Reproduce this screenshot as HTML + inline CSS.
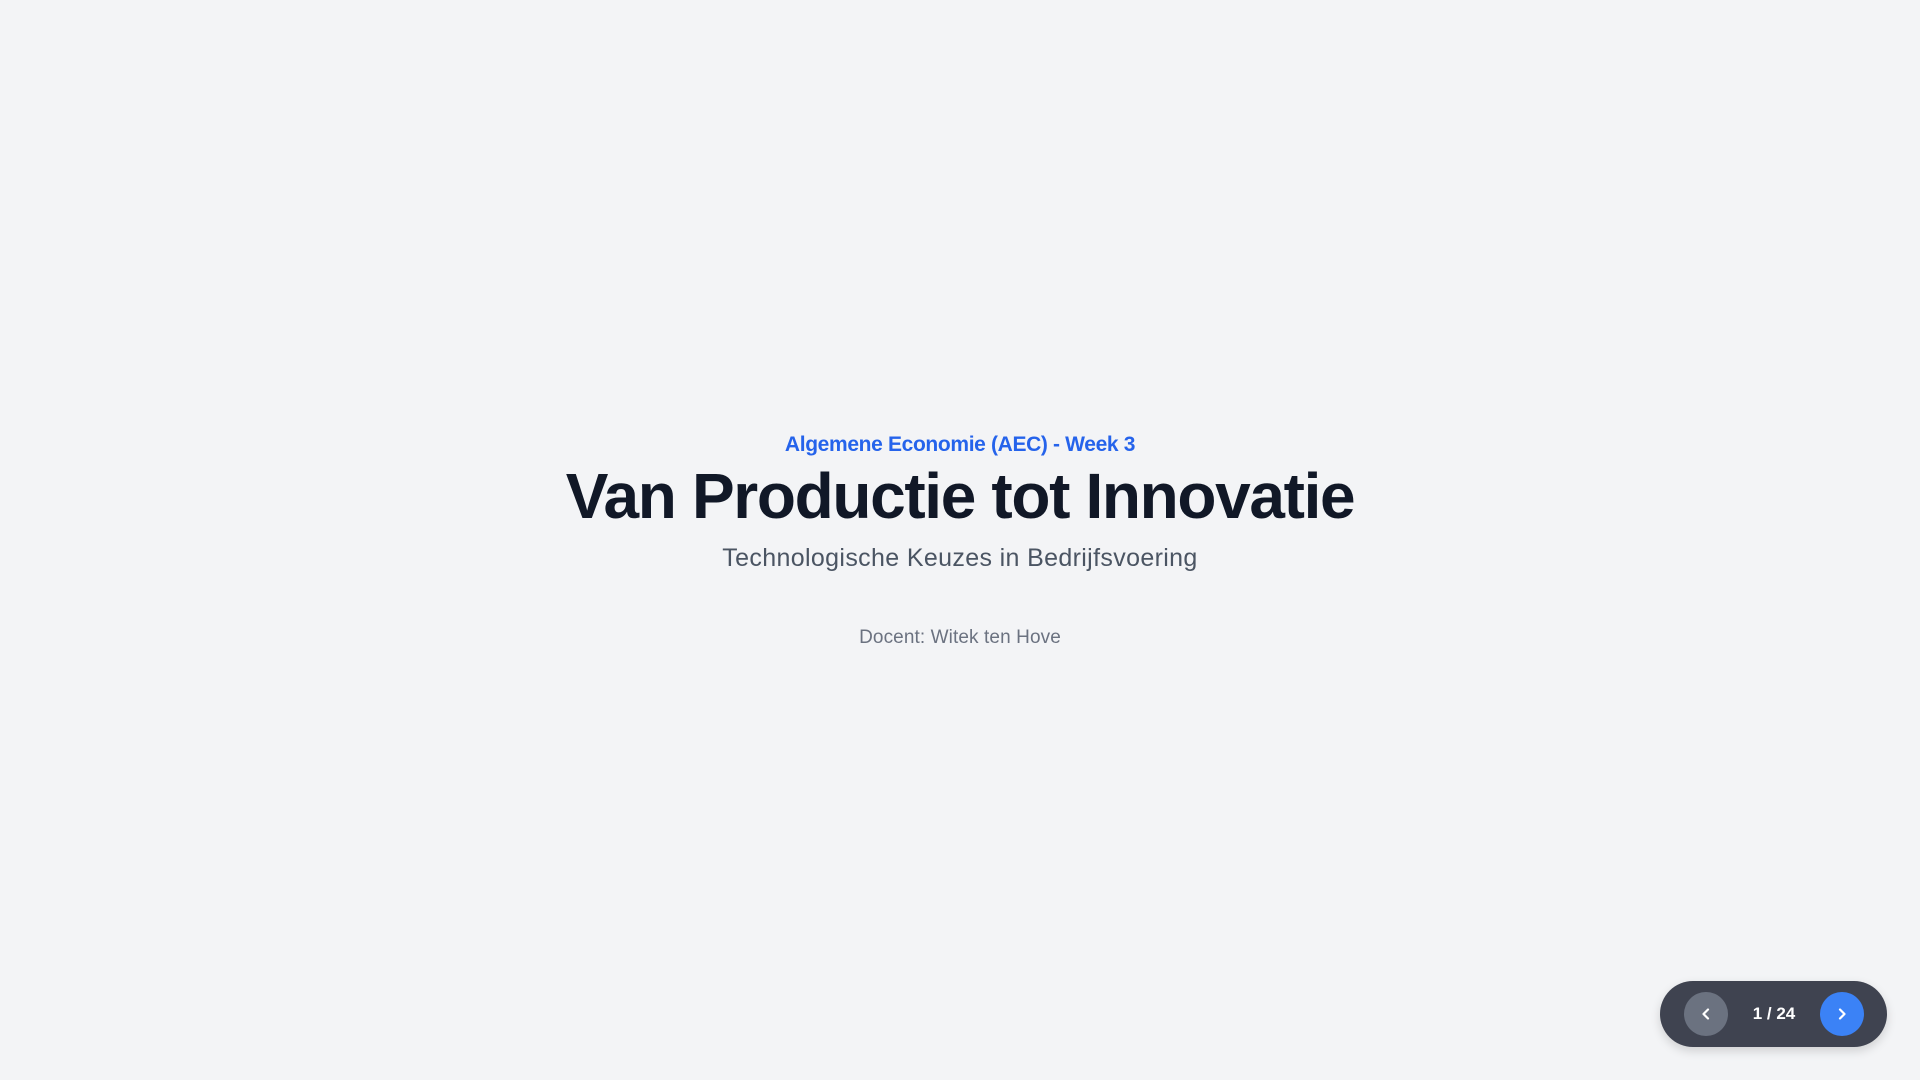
<!DOCTYPE html>
<html><head><meta charset="utf-8"><style>
html,body{margin:0;width:1920px;height:1080px;background:#f3f4f6;font-family:"Liberation Sans",sans-serif;overflow:hidden;position:relative}
.c{position:absolute;left:0;width:1920px;text-align:center;white-space:nowrap}
.k{top:433px;font-size:21px;font-weight:bold;color:#2563eb;letter-spacing:-0.35px}
.t{top:458px;font-size:64px;font-weight:bold;color:#111827;letter-spacing:-1.35px;line-height:76px}
.s{top:543px;font-size:25px;color:#4b5563;line-height:30px;letter-spacing:0.35px}
.d{top:627px;font-size:19px;color:#6b7280;line-height:22px;letter-spacing:0.1px}
.nav{position:absolute;left:1660px;top:981px;width:227px;height:66px;border-radius:33px;background:#3f4350;box-shadow:0 4px 10px rgba(0,0,0,.15)}
.b{position:absolute;top:11px;width:44px;height:44px;border-radius:50%}
.p{left:24px;background:#6b7280}.n{left:160px;background:#3b82f6}
.b svg{position:absolute;left:14px;top:14px}
.num{position:absolute;left:68px;width:92px;top:0;line-height:66px;text-align:center;color:#fff;font-weight:bold;font-size:17px}
</style></head><body>
<div class="c k">Algemene Economie (AEC) - Week 3</div>
<div class="c t">Van Productie tot Innovatie</div>
<div class="c s">Technologische Keuzes in Bedrijfsvoering</div>
<div class="c d">Docent: Witek ten Hove</div>
<div class="nav">
<div class="b p"><svg width="16" height="16" viewBox="0 0 16 16"><path d="M10 3.5 L5.5 8 L10 12.5" fill="none" stroke="#fff" stroke-width="2.2" stroke-linecap="round" stroke-linejoin="round"/></svg></div>
<div class="num">1 / 24</div>
<div class="b n"><svg width="16" height="16" viewBox="0 0 16 16"><path d="M6 3.5 L10.5 8 L6 12.5" fill="none" stroke="#fff" stroke-width="2.2" stroke-linecap="round" stroke-linejoin="round"/></svg></div>
</div>
</body></html>
